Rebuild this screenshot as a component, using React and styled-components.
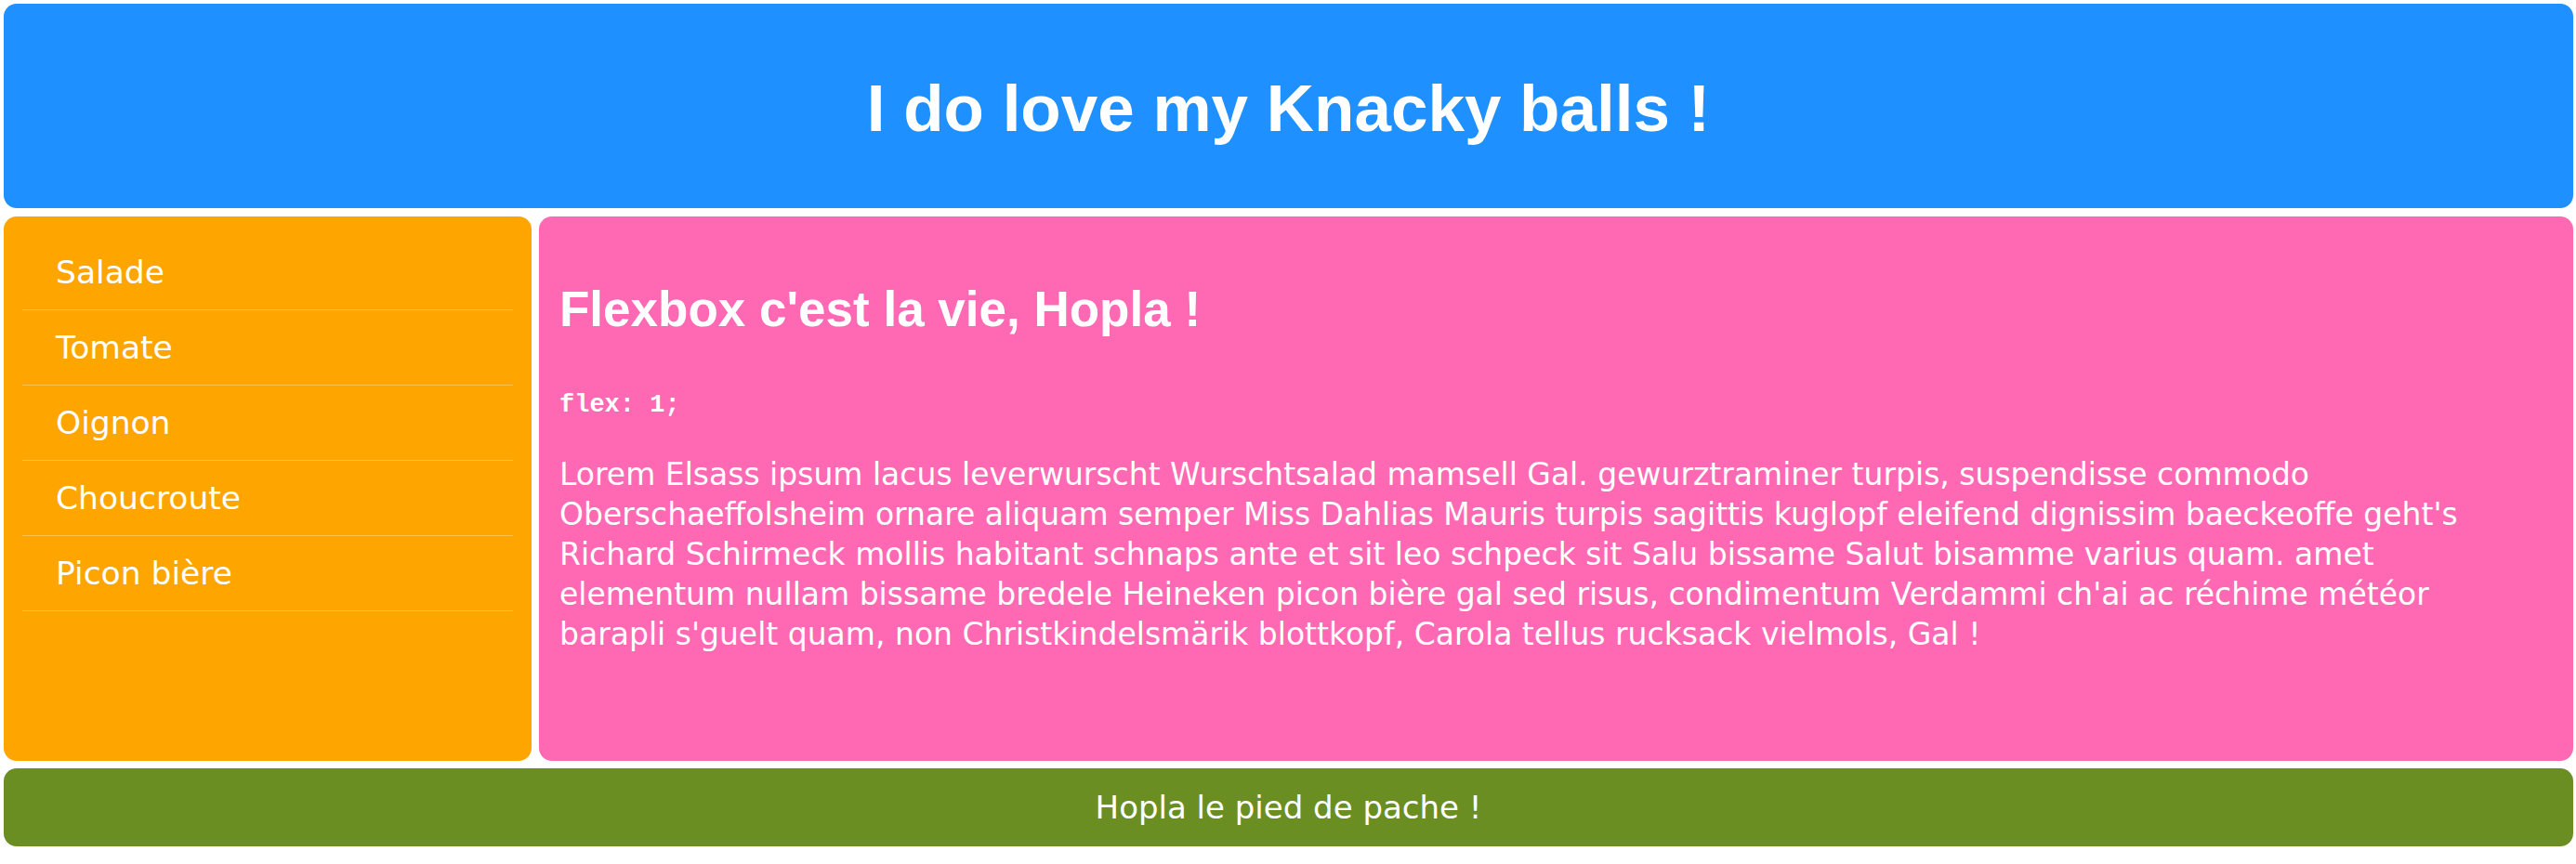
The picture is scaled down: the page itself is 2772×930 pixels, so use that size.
import React from "react";
import styled, { createGlobalStyle } from "styled-components";

const GlobalStyle = createGlobalStyle`
  html, body { background: #ffffff; }
  body {
    margin: 4px 3px 2px 4px;
    font-family: "DejaVu Sans", "Liberation Sans", sans-serif;
    color: #ffffff;
  }
  * { box-sizing: border-box; }
`;

const Page = styled.div`
  display: grid;
  grid-template-rows: 220px 603px 84px;
  grid-template-columns: 1fr;
`;

const Header = styled.header`
  background: #1e90ff;
  border-radius: 14px;
  display: flex;
  align-items: center;
  justify-content: center;
  padding-top: 6px;
`;

const Title = styled.h1`
  margin: 0;
  font-family: "Liberation Sans", Arial, sans-serif;
  font-weight: 700;
  font-size: 71px;
  line-height: 80px;
`;

const Middle = styled.div`
  display: flex;
  gap: 8px;
  margin: 9px 0 8px;
  min-height: 0;
`;

const Aside = styled.nav`
  flex: 0 0 568px;
  background: #ffa500;
  border-radius: 14px;
  padding: 20px 20px;
`;

const Menu = styled.ul`
  list-style: none;
  margin: 0;
  padding: 0;
`;

const MenuItem = styled.li`
  height: 81px;
  line-height: 80px;
  padding-left: 36px;
  font-size: 34.5px;
  border-bottom: 1px solid rgba(255, 255, 255, 0.28);
`;

const Main = styled.main`
  flex: 1;
  background: #ff69b4;
  border-radius: 14px;
  padding: 0 53px 0 22px;
`;

const Heading = styled.h2`
  margin: 70px 0 0;
  font-family: "Liberation Sans", Arial, sans-serif;
  font-weight: 700;
  font-size: 53px;
  line-height: 60px;
`;

const Code = styled.code`
  display: block;
  margin-top: 57px;
  font-family: "Liberation Mono", "Courier New", monospace;
  font-weight: 700;
  font-size: 27px;
  line-height: 32px;
`;

const Text = styled.p`
  margin: 37px 0 0;
  font-size: 33px;
  line-height: 43px;
`;

const Footer = styled.footer`
  background: #6b8e23;
  border-radius: 14px;
  display: flex;
  align-items: center;
  justify-content: center;
  font-size: 34px;
`;

const items = ["Salade", "Tomate", "Oignon", "Choucroute", "Picon bière"];

export default function App() {
  return (
    <>
      <GlobalStyle />
      <Page>
        <Header>
          <Title>I do love my Knacky balls !</Title>
        </Header>
        <Middle>
          <Aside>
            <Menu>
              {items.map((it) => (
                <MenuItem key={it}>{it}</MenuItem>
              ))}
            </Menu>
          </Aside>
          <Main>
            <Heading>Flexbox c'est la vie, Hopla !</Heading>
            <Code>flex: 1;</Code>
            <Text>
              Lorem Elsass ipsum lacus leverwurscht Wurschtsalad mamsell Gal.
              gewurztraminer turpis, suspendisse commodo Oberschaeffolsheim ornare
              aliquam semper Miss Dahlias Mauris turpis sagittis kuglopf eleifend
              dignissim baeckeoffe geht's Richard Schirmeck mollis habitant schnaps
              ante et sit leo schpeck sit Salu bissame Salut bisamme varius quam.
              amet elementum nullam bissame bredele Heineken picon bière gal sed
              risus, condimentum Verdammi ch'ai ac réchime météor barapli s'guelt
              quam, non Christkindelsmärik blottkopf, Carola tellus rucksack
              vielmols, Gal !
            </Text>
          </Main>
        </Middle>
        <Footer>Hopla le pied de pache !</Footer>
      </Page>
    </>
  );
}
